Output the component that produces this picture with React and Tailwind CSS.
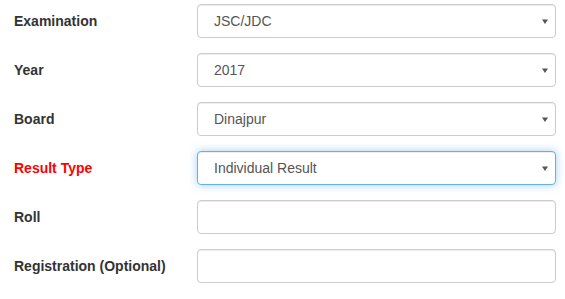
import React from "react";

const rows = [
  { label: "Examination", value: "JSC/JDC", select: true },
  { label: "Year", value: "2017", select: true },
  { label: "Board", value: "Dinajpur", select: true },
  { label: "Result Type", value: "Individual Result", select: true, focus: true },
  { label: "Roll" },
  { label: "Registration (Optional)" },
];

function Caret() {
  return (
    <svg width="6" height="5" viewBox="0 0 6 5" className="shrink-0">
      <path d="M0 0.5H6L3 5Z" fill="#555" />
    </svg>
  );
}

export default function App() {
  return (
    <div
      className="w-[565px] h-[299px] bg-white pl-[14px] pr-[9px] pt-[4px] text-[14px]"
      style={{ fontFamily: '"Liberation Sans", Arial, sans-serif' }}
    >
      {rows.map((r) => (
        <div key={r.label} className="flex items-center h-[34px] mb-[15px]">
          <div
            className={
              "w-[183px] font-bold " +
              (r.focus ? "text-[#ff0000]" : "text-[#333]")
            }
          >
            {r.label}
          </div>
          {r.select ? (
            <div
              className={
                "flex-1 h-[34px] flex items-center justify-between pl-[16px] pr-[7px] rounded-[4px] border bg-white text-[#555] " +
                (r.focus
                  ? "border-[#66afe9] shadow-[inset_0_1px_1px_rgba(0,0,0,0.075),0_0_8px_rgba(102,175,233,0.6)]"
                  : "border-[#ccc] shadow-[inset_0_1px_1px_rgba(0,0,0,0.075)]")
              }
            >
              <span>{r.value}</span>
              <Caret />
            </div>
          ) : (
            <input
              type="text"
              className="flex-1 h-[34px] px-3 rounded-[4px] border border-[#ccc] bg-white text-[#555] outline-none shadow-[inset_0_1px_1px_rgba(0,0,0,0.075)]"
            />
          )}
        </div>
      ))}
    </div>
  );
}
